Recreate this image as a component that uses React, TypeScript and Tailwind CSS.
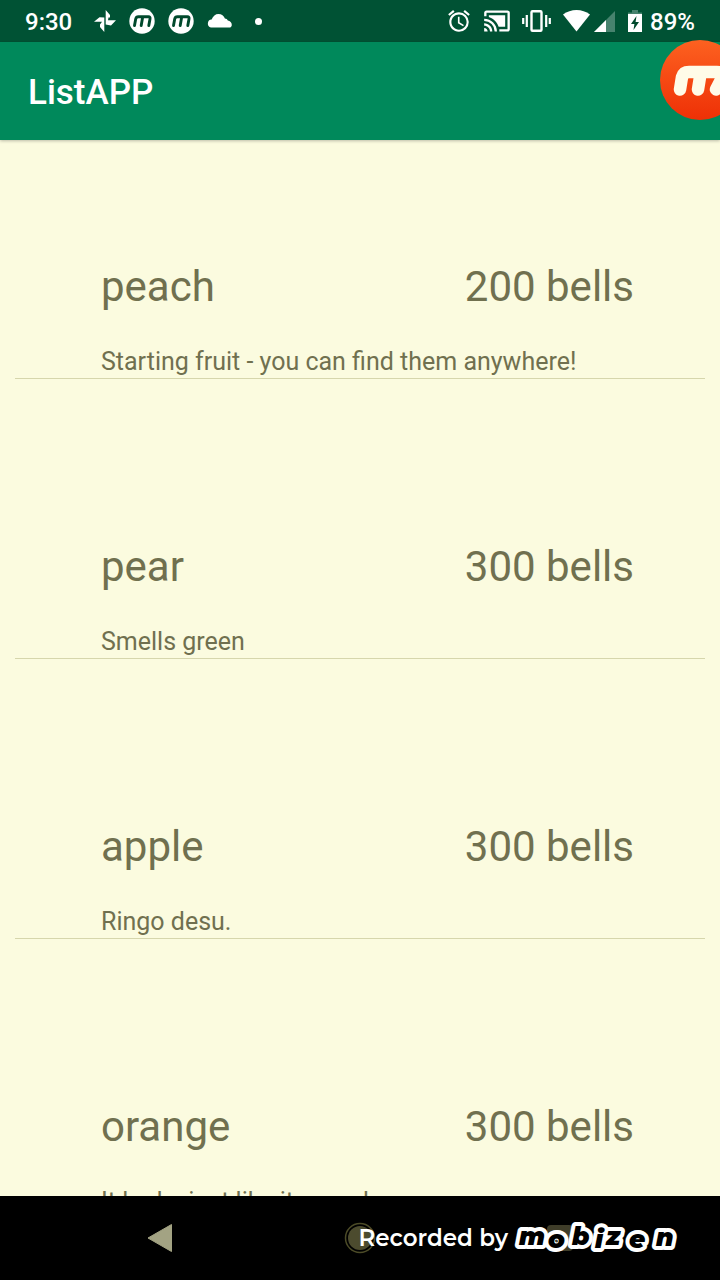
import React from 'react';
import { MdAlarm, MdCastConnected } from 'react-icons/md';

type Item = { name: string; price: string; note: string };

const items: Item[] = [
  { name: 'peach', price: '200 bells', note: 'Starting fruit - you can find them anywhere!' },
  { name: 'pear', price: '300 bells', note: 'Smells green' },
  { name: 'apple', price: '300 bells', note: 'Ringo desu.' },
  { name: 'orange', price: '300 bells', note: 'It looks just like it sounds' },
];

function MobizenBadge() {
  return (
    <svg width="26" height="26" viewBox="0 0 26 26" aria-hidden="true">
      <circle cx="13" cy="13" r="12.7" fill="#fff" />
      <path
        d="M5.500 17.600 6.700 11Q7.200 8.700 9.400 8.700H19.400Q21.500 8.700 21 11L19.800 17.600M13.600 9.500 12.200 17.600"
        fill="none"
        stroke="#00492c"
        strokeWidth="2.900"
        strokeLinecap="round"
        strokeLinejoin="round"
      />
    </svg>
  );
}

function StatusBar() {
  return (
    <div className="flex h-[42px] shrink-0 items-center justify-between bg-[#005234] px-[25px] text-2xl text-white">
      <div className="flex items-center">
        <span className="pt-[2px] font-medium">9:30</span>
        <div className="ml-[22px] flex items-center gap-[13px]">
          <svg width="22" height="22" viewBox="0 0 22 22" fill="#fff" aria-hidden="true">
            <path d="M11.700 10.300V0L16 5V7.500H14.500L14 10.300zM11.700 11.700V10.300H22L17 15.500 11.700 14.500zM10.300 11.700V22L6 17V14.500L8 11.700zM10.300 10.300V11.700H0L5.500 7.200 10.300 7.500z" />
          </svg>
          <MobizenBadge />
          <MobizenBadge />
          <svg width="26" height="14" viewBox="0 0 26 14" fill="#fff" aria-hidden="true">
            <path d="M4 13.500A4 4 0 0 1 4.600 5.600C6 2 8.500 0 11.400 0c3.200 0 5.600 2 6.500 4.600 1.400 0 2.400.7 2.900 2 2.300.5 4 2.200 4 4.300 0 1.600-1.200 2.600-2.800 2.600z" />
          </svg>
          <span className="ml-[9px] size-[7px] rounded-full bg-white" />
        </div>
      </div>
      <div className="flex items-center">
        <div className="flex items-center gap-[11px]">
          <MdAlarm size={26} />
          <MdCastConnected size={28} />
          <svg width="29" height="22" viewBox="0 0 29 22" aria-hidden="true">
            <rect x="9.500" y="1.200" width="10" height="19.600" rx="1" fill="none" stroke="#fff" strokeWidth="2.400" />
            <path d="M1.200 8v6M4.800 5v12M24.200 5v12M27.800 8v6" stroke="#fff" strokeWidth="2.200" />
          </svg>
        </div>
        <div className="ml-3 flex items-center gap-1">
          <svg width="27" height="22" viewBox="0 0 27 22" fill="#fff" aria-hidden="true">
            <path d="M0 4.500C4 1.500 8.500 0 13.500 0S23 1.500 27 4.500L13.500 21.500z" />
          </svg>
          <svg width="21" height="22" viewBox="0 0 21 22" aria-hidden="true">
            <path d="M21 1V22H0z" fill="#47836e" />
            <path d="M12 10V22H0z" fill="#fff" />
          </svg>
        </div>
        <svg className="ml-[13px]" width="14" height="24" viewBox="0 0 14 24" aria-hidden="true">
          <path d="M4 1h6v2.500h4V6H0V3.500h4z" fill="#47836e" />
          <path d="M0 5h14v18H0z" fill="#fff" />
          <path d="M8.500 7 3 15h3.400L5.500 21 11 13H7.600z" fill="#00492c" />
        </svg>
        <span className="ml-2 pt-[2px] font-medium">89%</span>
      </div>
    </div>
  );
}

function Watermark() {
  return (
    <div className="pointer-events-none absolute inset-y-0 right-[34px] flex items-center">
      <span className="font-[Montserrat,Lato,sans-serif] text-[23px] font-semibold text-white">Recorded by</span>
      <svg className="ml-1" width="174" height="40" viewBox="0 0 174 40" role="img" aria-label="Mobizen">
        <g
          fontFamily="Montserrat, DejaVu Sans"
          fontWeight="900"
          fontStyle="italic"
          fontSize="25"
          strokeLinejoin="round"
        >
          <text x="7 36 60 83 94 117 144" y="27 30 27 30 27 30 28" fill="#fff" stroke="#fff" strokeWidth="8">
            mobizen
          </text>
          <text x="7 36 60 83 94 117 144" y="27 30 27 30 27 30 28" fill="#000">
            mobizen
          </text>
        </g>
      </svg>
    </div>
  );
}

function NavigationBar() {
  return (
    <nav className="relative flex h-[84px] shrink-0 bg-black px-[60px]">
      <button aria-label="Back" className="flex flex-1 items-center justify-center">
        <svg width="26" height="30" viewBox="0 0 26 30">
          <path d="M24.500 1.500V28.500L1 15z" fill="#a3a383" stroke="#a3a383" strokeLinejoin="round" />
        </svg>
      </button>
      <button aria-label="Home" className="flex flex-1 items-center justify-center">
        <svg width="32" height="32" viewBox="0 0 32 32">
          <circle cx="16" cy="16" r="14.500" fill="none" stroke="#4c4b27" strokeWidth="1.500" />
          <circle cx="16" cy="16" r="12" fill="#4c4b2e" />
        </svg>
      </button>
      <button aria-label="Recent apps" className="flex flex-1 items-center justify-center">
        <span className="size-[26px] rounded-sm bg-[#3f3d29]" />
      </button>
      <Watermark />
    </nav>
  );
}

export default function App() {
  return (
    <div className="relative flex h-screen flex-col overflow-hidden bg-[#fbfbdf] font-[Roboto,sans-serif]">
      <StatusBar />
      <header className="z-10 flex h-[98px] shrink-0 items-center bg-[#00895b] px-7 pt-1 shadow-[0_1px_3px_rgba(0,0,0,0.25)]">
        <h1 className="text-[35px] font-medium text-white">ListAPP</h1>
      </header>
      <button aria-label="Mobizen recorder" className="absolute -right-5 top-10 z-20 size-20">
        <svg width="80" height="80" viewBox="0 0 80 80">
          <defs>
            <linearGradient id="recorder" x1="0" y1="0" x2="0" y2="1">
              <stop offset="0" stopColor="#fd6120" />
              <stop offset="1" stopColor="#ee3006" />
            </linearGradient>
          </defs>
          <circle cx="40" cy="40" r="40" fill="url(#recorder)" />
          <path
            d="M20 49.500 22 37Q23.500 32 29 32H57Q63 32 62 38L56 49.500M40.500 34 38 49.500"
            fill="none"
            stroke="#fffbe8"
            strokeWidth="12.500"
            strokeLinecap="round"
            strokeLinejoin="round"
          />
        </svg>
      </button>
      <main className="min-h-0 flex-1 overflow-hidden px-[15px] pt-[119px]">
        <ul className="flex flex-col gap-[160px]">
          {items.map((item) => (
            <li key={item.name} className="border-b border-[#d6d6ac] pb-px pl-[86px] pr-[71px] text-[#70704f]">
              <div className="flex justify-between text-[42px] leading-[56px]">
                <span>{item.name}</span>
                <span>{item.price}</span>
              </div>
              <p className="mt-8 text-[25px] leading-[30px]">{item.note}</p>
            </li>
          ))}
        </ul>
      </main>
      <NavigationBar />
    </div>
  );
}
